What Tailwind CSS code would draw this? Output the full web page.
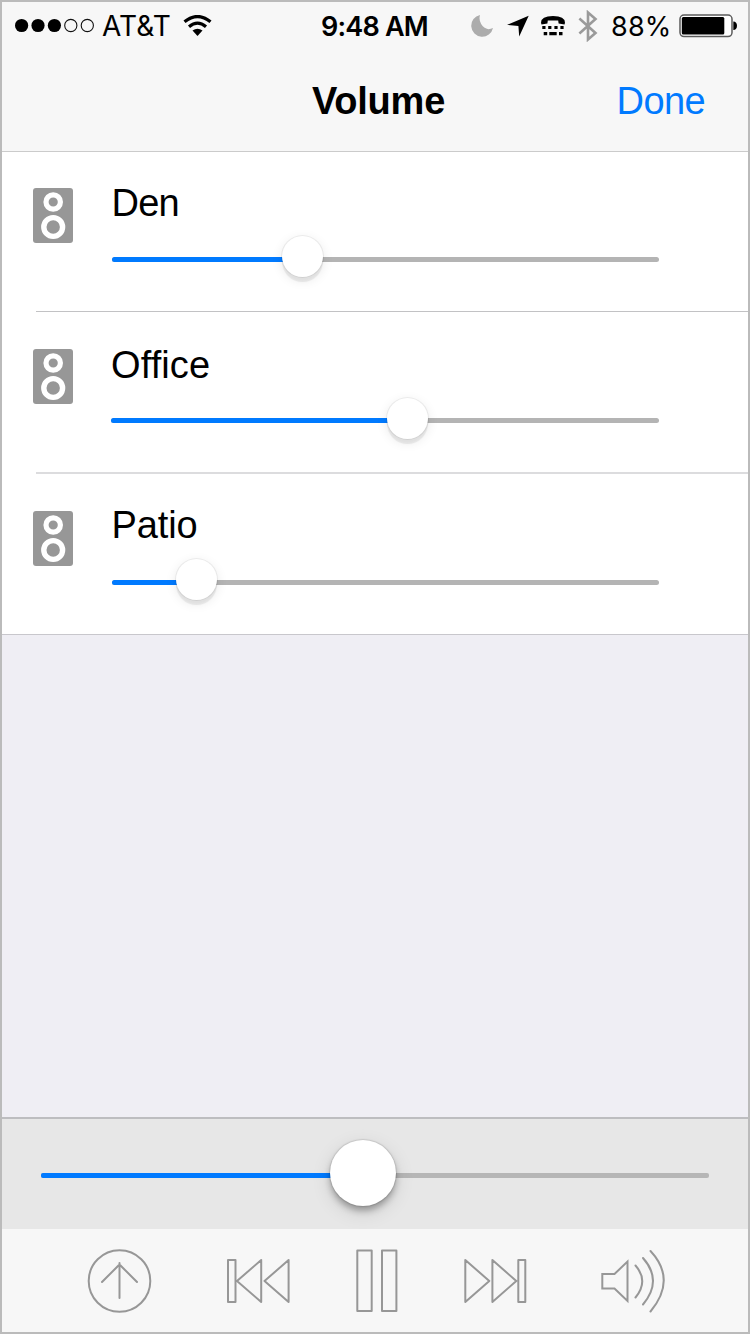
<!DOCTYPE html>
<html lang="en">
<head>
<meta charset="utf-8">
<title>Volume</title>
<script src="https://cdn.jsdelivr.net/npm/@tailwindcss/browser@4"></script>
</head>
<body class="bg-white">
<svg class="hidden">
  <symbol id="speaker" viewBox="0 0 40 55">
    <rect width="40" height="55" rx="3" fill="#979797"/>
    <circle cx="20.2" cy="14" r="7.2" fill="none" stroke="#fff" stroke-width="5.2"/>
    <circle cx="20.2" cy="39" r="9.4" fill="none" stroke="#fff" stroke-width="5.4"/>
  </symbol>
</svg>
<div class="flex h-[1334px] w-[750px] flex-col border-2 border-[#bbb] bg-[#efeef4] font-['Liberation_Sans',Arial,sans-serif] text-black">
  <header class="h-[150px] shrink-0 border-b border-[#cbcbcb] bg-[#f7f7f7]">
    <div class="flex h-12 items-center font-[Inter,sans-serif] text-[27px] leading-none">
      <svg class="ml-3 shrink-0" width="82" height="20" viewBox="0 0 82 20">
        <circle cx="7.6" cy="9.5" r="6.6"/><circle cx="24" cy="9.5" r="6.6"/><circle cx="40.4" cy="9.5" r="6.6"/>
        <g fill="none" stroke="#111" stroke-width="1.1"><circle cx="56.8" cy="9.5" r="6.1"/><circle cx="73.3" cy="9.5" r="6.1"/></g>
      </svg>
      <span class="ml-[6px] w-[68px] whitespace-nowrap text-[28px] tracking-[0.1px]">AT&amp;T</span>
      <svg class="ml-[12px] shrink-0" width="30" height="22" viewBox="0 0 30 22">
        <g fill="none" stroke="#000" stroke-width="3.2"><path d="M2.5 6.8Q15.5-3.8 28.5 6.8"/><path d="M7 11.8Q15.5 4.6 24 11.8"/></g>
        <path d="M10.5 15.6Q15.5 12 20.5 15.6L15.5 21Z"/>
      </svg>
      <span class="ml-[109px] w-[107px] whitespace-nowrap font-semibold tracking-[-0.8px]">9:48 AM</span>
      <svg class="ml-[42.5px] shrink-0" width="22" height="22" viewBox="0 0 22 22"><path fill="#acacac" d="M9 0A11.3 11.3 0 0 0 17.5 14.2C19 14.2 20.6 13.7 22 13.1A11 11 0 1 1 9 0Z"/></svg>
      <svg class="ml-[14px] shrink-0" width="22" height="22" viewBox="0 0 22 22"><path d="M21.7.7L12.2 21.6 11.4 11 0 9.8Z"/></svg>
      <svg class="ml-[12.5px] shrink-0" width="24" height="20" viewBox="0 0 24 20">
        <path d="M0 6.8Q0 0 12 0T24 6.8L23.5 8.4 17.6 7.4 17.2 4.4H6.8L6.4 7.4.5 8.4Z"/>
        <path d="M1.3 10h3.2v3H1.3zM7.2 10h3.2v3H7.2zM13.4 10h3.2v3h-3.2zM19.4 10h3.2v3h-3.2zM2.7 16h3.5v3.2H2.7zM8.3 16h7.4v3.2H8.3zM18 16h3.5v3.2H18z"/>
      </svg>
      <svg class="ml-[13px] shrink-0" width="20" height="32" viewBox="0 0 20 32"><path d="M1.4 8.5L17.5 23 10 29.5V2.5L17.5 9 1.4 23.5" fill="none" stroke="#9a9a9a" stroke-width="2.6"/></svg>
      <span class="ml-[13px] w-[59px] whitespace-nowrap tracking-[0.2px]">88%</span>
      <svg class="ml-[9px] shrink-0" width="58" height="24" viewBox="0 0 58 24">
        <rect x="1" y="1" width="52" height="21.6" rx="4" fill="#fff" stroke="#5b5b5b" stroke-width="1.5"/>
        <rect x="2.8" y="3" width="42.5" height="17.6" rx="1.5"/><path d="M54.3 7.5Q58 7.7 58 11.8T54.3 16Z"/>
      </svg>
    </div>
    <div class="grid h-[102px] grid-cols-[1fr_auto_1fr] items-center text-[38px] leading-none">
      <h1 class="col-start-2 ml-[7px] whitespace-nowrap font-bold tracking-[-0.2px]">Volume</h1>
      <button class="mr-[43px] justify-self-end tracking-[-0.6px] text-[#007aff]">Done</button>
    </div>
  </header>

  <main class="shrink-0 border-b border-[#c8c7cc] bg-white text-[38px] leading-[44px]">
    <section class="flex h-[159px] pl-[31px] pt-[36px]">
      <svg class="h-[55px] w-10 shrink-0"><use href="#speaker"/></svg>
      <div class="ml-[38.5px] w-[547.5px]">
        <h2 class="-mt-[7px] tracking-[-0.8px]">Den</h2>
        <div class="relative mt-[32px] h-[5px] rounded-full bg-[#b4b4b4]">
          <div class="h-full w-[190px] rounded-full bg-[#007aff]"></div>
          <div class="absolute left-[170px] -top-[21px] size-[41px] rounded-full bg-white shadow-[0_0_0_1px_rgba(0,0,0,0.06),0_5px_1px_rgba(0,0,0,0.07),0_3px_12px_rgba(0,0,0,0.1)]"></div>
        </div>
      </div>
    </section>
    <div class="ml-[34px] h-px bg-[#c2c2c4]"></div>
    <section class="flex h-[160px] pl-[31px] pt-[37px]">
      <svg class="h-[55px] w-10 shrink-0"><use href="#speaker"/></svg>
      <div class="ml-[38px] w-[548px]">
        <h2 class="-mt-[6px] tracking-[0.1px]">Office</h2>
        <div class="relative mt-[31px] h-[5px] rounded-full bg-[#b4b4b4]">
          <div class="h-full w-[296px] rounded-full bg-[#007aff]"></div>
          <div class="absolute left-[275.5px] -top-[20.5px] size-[41px] rounded-full bg-white shadow-[0_0_0_1px_rgba(0,0,0,0.06),0_5px_1px_rgba(0,0,0,0.07),0_3px_12px_rgba(0,0,0,0.1)]"></div>
        </div>
      </div>
    </section>
    <div class="ml-[34px] h-[2px] bg-[#dcdcde]"></div>
    <section class="flex h-[160px] pl-[31px] pt-[37px]">
      <svg class="h-[55px] w-10 shrink-0"><use href="#speaker"/></svg>
      <div class="ml-[38.5px] w-[547.5px]">
        <h2 class="-mt-[8px] tracking-[-0.1px]">Patio</h2>
        <div class="relative mt-[33px] h-[5px] rounded-full bg-[#b4b4b4]">
          <div class="h-full w-[85px] rounded-full bg-[#007aff]"></div>
          <div class="absolute left-[64.5px] -top-[21px] size-[41px] rounded-full bg-white shadow-[0_0_0_1px_rgba(0,0,0,0.06),0_5px_1px_rgba(0,0,0,0.07),0_3px_12px_rgba(0,0,0,0.1)]"></div>
        </div>
      </div>
    </section>
  </main>

  <footer class="mt-auto">
    <div class="h-[112px] border-t-2 border-[#bdbdc0] bg-[#e7e7e7] px-[39px] pt-[54px]">
      <div class="relative h-[5px] rounded-[2px] bg-[#b6b6b6]">
        <div class="h-full w-[322px] rounded-[2px] bg-[#007aff]"></div>
        <div class="absolute -top-[33px] left-[289px] size-[66px] rounded-full bg-white shadow-[0_0_1px_1px_rgba(0,0,0,0.1),0_5px_6px_rgba(0,0,0,0.28),0_6px_20px_rgba(0,0,0,0.12)]"></div>
      </div>
    </div>
    <nav class="flex h-[103px] items-center bg-[#f7f7f7] pl-[85px]">
      <svg width="66" height="66" viewBox="0 0 66 66" fill="none" stroke="#979797" stroke-width="2" stroke-linecap="round"><circle cx="32.5" cy="33" r="30.8"/><path d="M32.5 50V15M15 34L32.5 16.5 50 34"/></svg>
      <svg class="ml-[73px]" width="66" height="46" viewBox="0 0 66 46" fill="none" stroke="#979797" stroke-width="2" stroke-linejoin="round"><path d="M2 2H9.5V44H2ZM35.2 2V44L11 23ZM62.6 2V44L38.5 23Z"/></svg>
      <svg class="ml-[62px]" width="44" height="64" viewBox="0 0 44 64" fill="none" stroke="#979797" stroke-width="2" stroke-linejoin="round"><path d="M3.3 1.5H17.7V62H3.3ZM28 1.5H42.4V62H28Z"/></svg>
      <svg class="ml-[65px]" width="64" height="46" viewBox="0 0 64 46" fill="none" stroke="#979797" stroke-width="2" stroke-linejoin="round"><path d="M2.3 2V44L26.3 23ZM29.4 2V44L53.3 23ZM55.3 2H62.3V44H55.3Z"/></svg>
      <svg class="ml-[72.5px]" width="66" height="66" viewBox="0 0 66 66" fill="none" stroke="#979797" stroke-width="2"><path d="M2.3 26H14.5L27.5 13.5V53L14.5 40.5H2.3Z"/><path stroke-linecap="round" d="M35.5 17.5Q49 33 35.5 49.5M43 10Q63 32.5 43 56.5M50.5 3Q77 31.5 50.5 63.5"/></svg>
    </nav>
  </footer>
</div>
</body>
</html>
